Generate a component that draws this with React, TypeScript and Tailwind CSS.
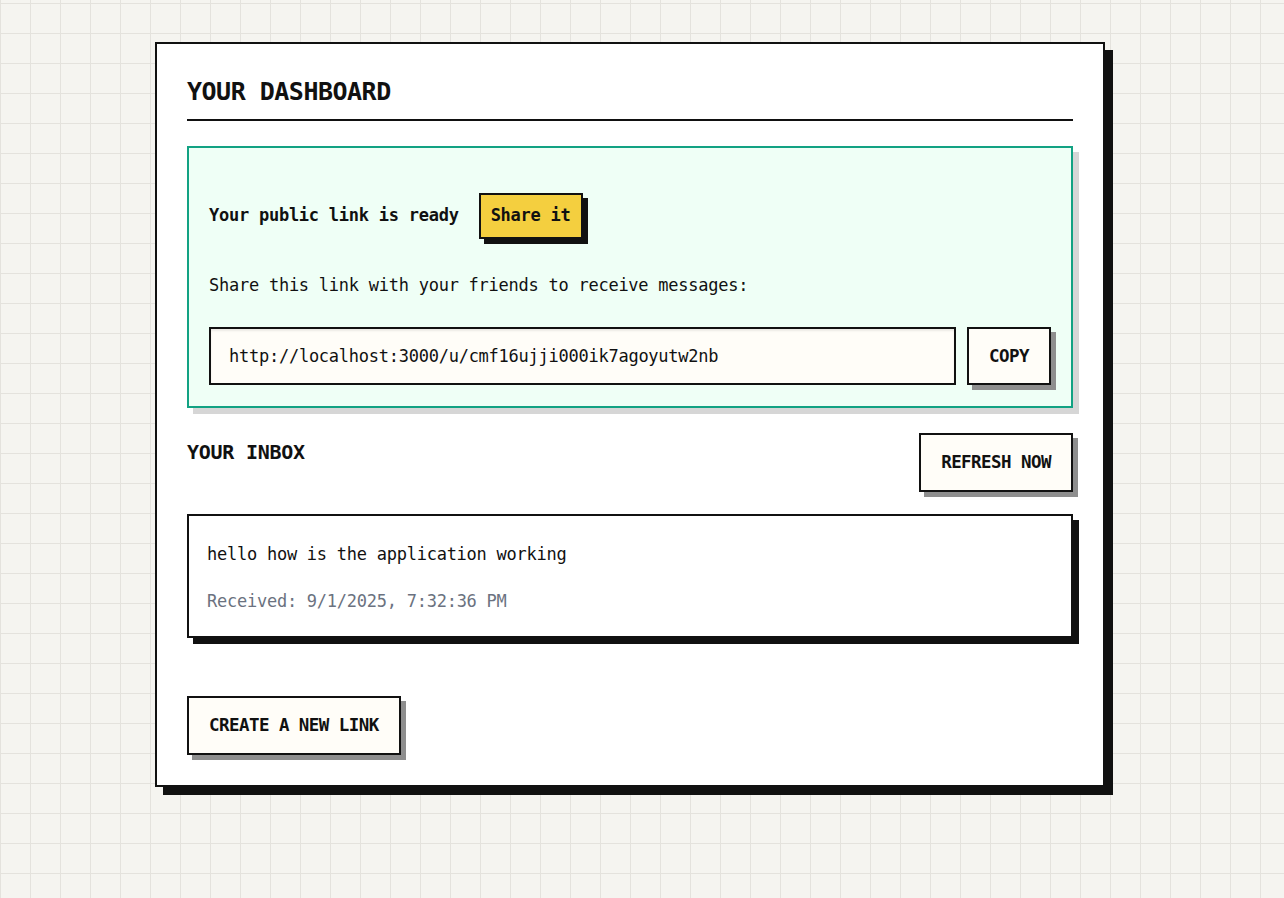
import { useState } from 'react'

type Message = {
    content: string;
    createdAt: string;
};

function App() {
    const [link] = useState('http://localhost:3000/u/cmf16ujji000ik7agoyutw2nb');
    const [messages] = useState<Message[]>([
        { content: 'hello how is the application working', createdAt: '9/1/2025, 7:32:36 PM' }
    ]);

    return (
        <div className="min-h-screen bg-[#f5f4f0] bg-[linear-gradient(to_right,#e4e2dd_1px,transparent_1px),linear-gradient(to_bottom,#e4e2dd_1px,transparent_1px)] bg-[size:30px_30px] bg-[position:0_3px] pt-[42px] pb-10 font-['DejaVu_Sans_Mono',monospace] text-[#111]">
            <div className="ml-[155px] w-[950px] border-2 border-[#111] bg-white p-[30px] shadow-[8px_8px_0_#111]">
                <h1 className="border-b-2 border-[#111] pb-[9px] text-[25px] leading-[36px] font-bold tracking-[-0.5px]">
                    YOUR DASHBOARD
                </h1>

                {/* Public link panel */}
                <div className="mt-[25px] border-2 border-[#12a283] bg-[#effff6] px-5 pb-[21px] pt-[45px] shadow-[6px_6px_0_#d6d6d6]">
                    <div className="flex items-center gap-[20px]">
                        <span className="text-[17px] font-bold tracking-[-0.25px]">Your public link is ready</span>
                        <button className="h-[46px] border-2 border-[#111] bg-[#f4cf3f] px-[10px] text-[17px] font-bold tracking-[-0.25px] shadow-[5px_5px_0_#111]">
                            Share it
                        </button>
                    </div>
                    <p className="mt-[34px] text-[17px] leading-[24px] tracking-[-0.25px]">
                        Share this link with your friends to receive messages:
                    </p>
                    <div className="mt-[30px] flex gap-[11px]">
                        <input
                            readOnly
                            value={link}
                            className="h-[58px] flex-1 border-2 border-[#111] bg-[#fffdf8] px-[18px] text-[17px] tracking-[-0.25px] text-[#111] shadow-[inset_0_2px_2px_rgba(0,0,0,0.08)] outline-none"
                        />
                        <button className="h-[58px] w-[84px] border-2 border-[#111] bg-[#fffdf8] text-[17.5px] font-bold tracking-[-0.55px] shadow-[5px_5px_0_#8e8e8e]">
                            COPY
                        </button>
                    </div>
                </div>

                {/* Inbox */}
                <div className="mt-[25px] flex items-start justify-between">
                    <h2 className="text-[20px] leading-[38px] font-bold tracking-[-0.25px]">YOUR INBOX</h2>
                    <button className="h-[59px] border-2 border-[#111] bg-[#fffdf8] px-[20px] text-[17.5px] font-bold tracking-[-0.55px] shadow-[5px_5px_0_#8e8e8e]">
                        REFRESH NOW
                    </button>
                </div>

                <div className="mt-[22px] flex flex-col gap-4">
                    {messages.map((msg, idx) => (
                        <div
                            key={idx}
                            className="flex flex-col gap-[23px] border-2 border-[#111] bg-white px-[18px] pt-[26px] pb-[23px] shadow-[6px_6px_0_#111]"
                        >
                            <p className="text-[17px] leading-[24px] tracking-[-0.25px]">{msg.content}</p>
                            <p className="text-[17px] leading-[24px] tracking-[-0.25px] text-[#6b7280]">
                                Received: {msg.createdAt}
                            </p>
                        </div>
                    ))}
                </div>

                <button className="mt-[58px] h-[59px] border-2 border-[#111] bg-[#fffdf8] px-[20px] text-[17.5px] font-bold tracking-[-0.55px] shadow-[5px_5px_0_#8e8e8e]">
                    CREATE A NEW LINK
                </button>
            </div>
        </div>
    )
}

export default App
